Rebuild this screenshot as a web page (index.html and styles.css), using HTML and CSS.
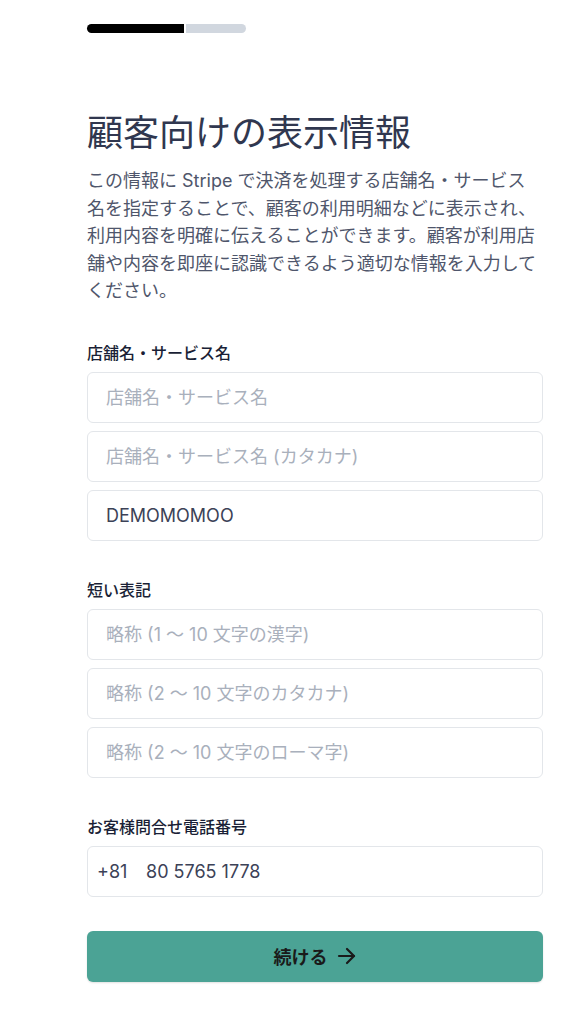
FILE: index.html
```html
<!DOCTYPE html>
<html lang="ja">

<head>
    <meta charset="UTF-8">
    <meta name="viewport" content="width=device-width, initial-scale=1.0">
    <title>顧客向けの表示情報</title>
    <link rel="stylesheet" href="styles.css">
</head>

<body>
    <div class="trang">
        <div class="tiendo">
            <div class="tiendo-xong"></div>
            <div class="tiendo-con"></div>
        </div>

        <h1 class="tieude">顧客向けの表示情報</h1>
        <p class="mota">この情報に Stripe で決済を処理する店舗名・サービス名を指定することで、顧客の利用明細などに表示され、利用内容を明確に伝えることができます。顧客が利用店舗や内容を即座に認識できるよう適切な情報を入力してください。</p>

        <form>
            <div class="nhom">
                <label class="nhan">店舗名・サービス名</label>
                <input class="o-nhap" type="text" placeholder="店舗名・サービス名">
                <input class="o-nhap" type="text" placeholder="店舗名・サービス名 (カタカナ)">
                <input class="o-nhap" type="text" value="DEMOMOMOO">
            </div>

            <div class="nhom">
                <label class="nhan">短い表記</label>
                <input class="o-nhap" type="text" placeholder="略称 (1 〜 10 文字の漢字)">
                <input class="o-nhap" type="text" placeholder="略称 (2 〜 10 文字のカタカナ)">
                <input class="o-nhap" type="text" placeholder="略称 (2 〜 10 文字のローマ字)">
            </div>

            <div class="nhom">
                <label class="nhan">お客様問合せ電話番号</label>
                <div class="o-dienthoai">
                    <span class="mavung">+81</span>
                    <input class="so" type="tel" value="80 5765 1778">
                </div>
            </div>

            <button class="nut-tiep" type="button">
                続ける
                <svg width="20" height="18" viewBox="0 0 20 18" fill="none" stroke="#1a1a1a" stroke-width="2.2"
                    stroke-linecap="round" stroke-linejoin="round">
                    <path d="M2 9h15" />
                    <path d="M10 2l7 7-7 7" />
                </svg>
            </button>
        </form>
    </div>
</body>

</html>
```

FILE: styles.css
```css
body {
    margin: 0;
    background-color: #fff;
    font-family: Inter, "Noto Sans CJK JP", sans-serif;
}

.trang {
    padding: 24px 28px 40px 87px;
}

.tiendo {
    display: flex;
    gap: 2px;
    width: 159px;
    height: 9px;
}

.tiendo-xong {
    width: 97px;
    background-color: #000;
    border-radius: 5px 0 0 5px;
}

.tiendo-con {
    flex: 1;
    background-color: #d1d7df;
    border-radius: 0 5px 5px 0;
}

.tieude {
    margin: 78px 0 0;
    font-size: 36px;
    line-height: 44px;
    font-weight: 400;
    color: #30374f;
}

.mota {
    margin: 12px 0 0;
    font-size: 18px;
    line-height: 27.5px;
    color: #4f566b;
}

form {
    margin-top: 38px;
}

.nhom {
    display: flex;
    flex-direction: column;
    gap: 8px;
    margin-bottom: 39px;
}

.nhan {
    font-size: 16px;
    line-height: 20px;
    font-weight: 500;
    color: #1a1f36;
    margin-bottom: 1px;
}

.o-nhap {
    box-sizing: border-box;
    height: 51px;
    width: 100%;
    padding: 0 18px;
    border: 1px solid #e3e6ea;
    border-radius: 6px;
    font-family: Inter, "Noto Sans CJK JP", sans-serif;
    font-size: 18px;
    color: #3c4257;
    outline: 0;
}

.o-nhap::placeholder {
    color: #a9b0bc;
}

.o-dienthoai {
    box-sizing: border-box;
    display: flex;
    align-items: center;
    height: 51px;
    padding: 0 9px;
    border: 1px solid #e3e6ea;
    border-radius: 6px;
}

.mavung {
    font-size: 18px;
    color: #3c4257;
    width: 49px;
}

.so {
    flex: 1;
    border: 0;
    padding: 0;
    outline: 0;
    font-family: Inter, "Noto Sans CJK JP", sans-serif;
    font-size: 18px;
    color: #3c4257;
}

.nut-tiep {
    display: flex;
    align-items: center;
    justify-content: center;
    gap: 9px;
    width: 100%;
    height: 51px;
    margin-top: -5px;
    border: 0;
    border-radius: 6px;
    background-color: #4ba395;
    box-shadow: 0 1px 2px rgba(0, 0, 0, 0.12);
    font-family: Inter, "Noto Sans CJK JP", sans-serif;
    font-size: 18px;
    font-weight: 600;
    color: #1a1a1a;
    cursor: pointer;
}
```
